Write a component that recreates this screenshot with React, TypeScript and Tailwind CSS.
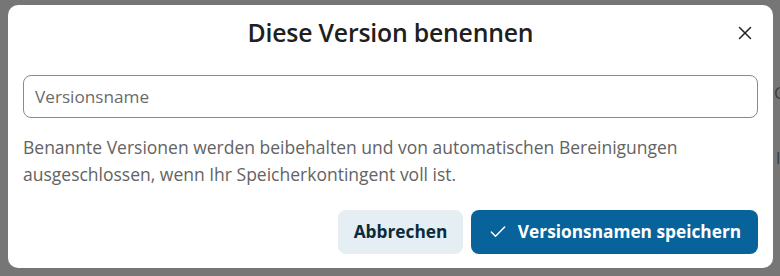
import { X, Check } from "lucide-react";

export default function App() {
  return (
    <div className="relative h-[276px] w-[780px] overflow-hidden bg-[#767676] font-['Open_Sans','Noto_Sans',sans-serif]">
      {/* Seitenreste hinter dem Overlay */}
      <div className="absolute left-[774px] top-[80px] text-[17px] text-[#3d3d3d]">C</div>
      <div className="absolute left-[776px] top-[145px] text-[17px] text-[#3d3d3d]">l,</div>

      <div className="relative ml-[8px] mt-[5px] flex h-[263px] w-[765px] flex-col rounded-[10px] bg-white px-[15px]">
        {/* Kopfzeile */}
        <div className="relative flex h-[56px] items-center justify-center">
          <h2 className="text-[24.8px] font-semibold text-[#202020] tracking-[-0.2px]">
            Diese Version benennen
          </h2>
          <button className="absolute right-[2px] top-[17px] text-[#222]" aria-label="Schließen">
            <X className="h-[22px] w-[22px]" strokeWidth={1.6} />
          </button>
        </div>

        {/* Eingabe */}
        <input
          placeholder="Versionsname"
          className="mt-[14px] h-[43px] w-full rounded-[8px] border border-[#8a8a8a] px-[11px] text-[17.2px] text-[#222] placeholder:text-[#6b6b6b] outline-none"
        />

        {/* Hinweis */}
        <p className="mt-[16px] text-[17.5px] leading-[27px] text-[#636363]">
          Benannte Versionen werden beibehalten und von automatischen Bereinigungen
          <br />
          ausgeschlossen, wenn Ihr Speicherkontingent voll ist.
        </p>

        {/* Aktionen */}
        <div className="mt-[22px] flex justify-end gap-[8px]">
          <button className="h-[44px] w-[125px] rounded-[8px] bg-[#e5eef3] text-[17.3px] font-bold text-[#0b2b3d]">
            Abbrechen
          </button>
          <button className="flex h-[44px] w-[287px] items-center justify-center gap-[10px] rounded-[8px] bg-[#07639a] text-[17.3px] font-bold text-white">
            <Check className="h-[20px] w-[20px]" strokeWidth={1.8} />
            Versionsnamen speichern
          </button>
        </div>
      </div>
    </div>
  );
}
